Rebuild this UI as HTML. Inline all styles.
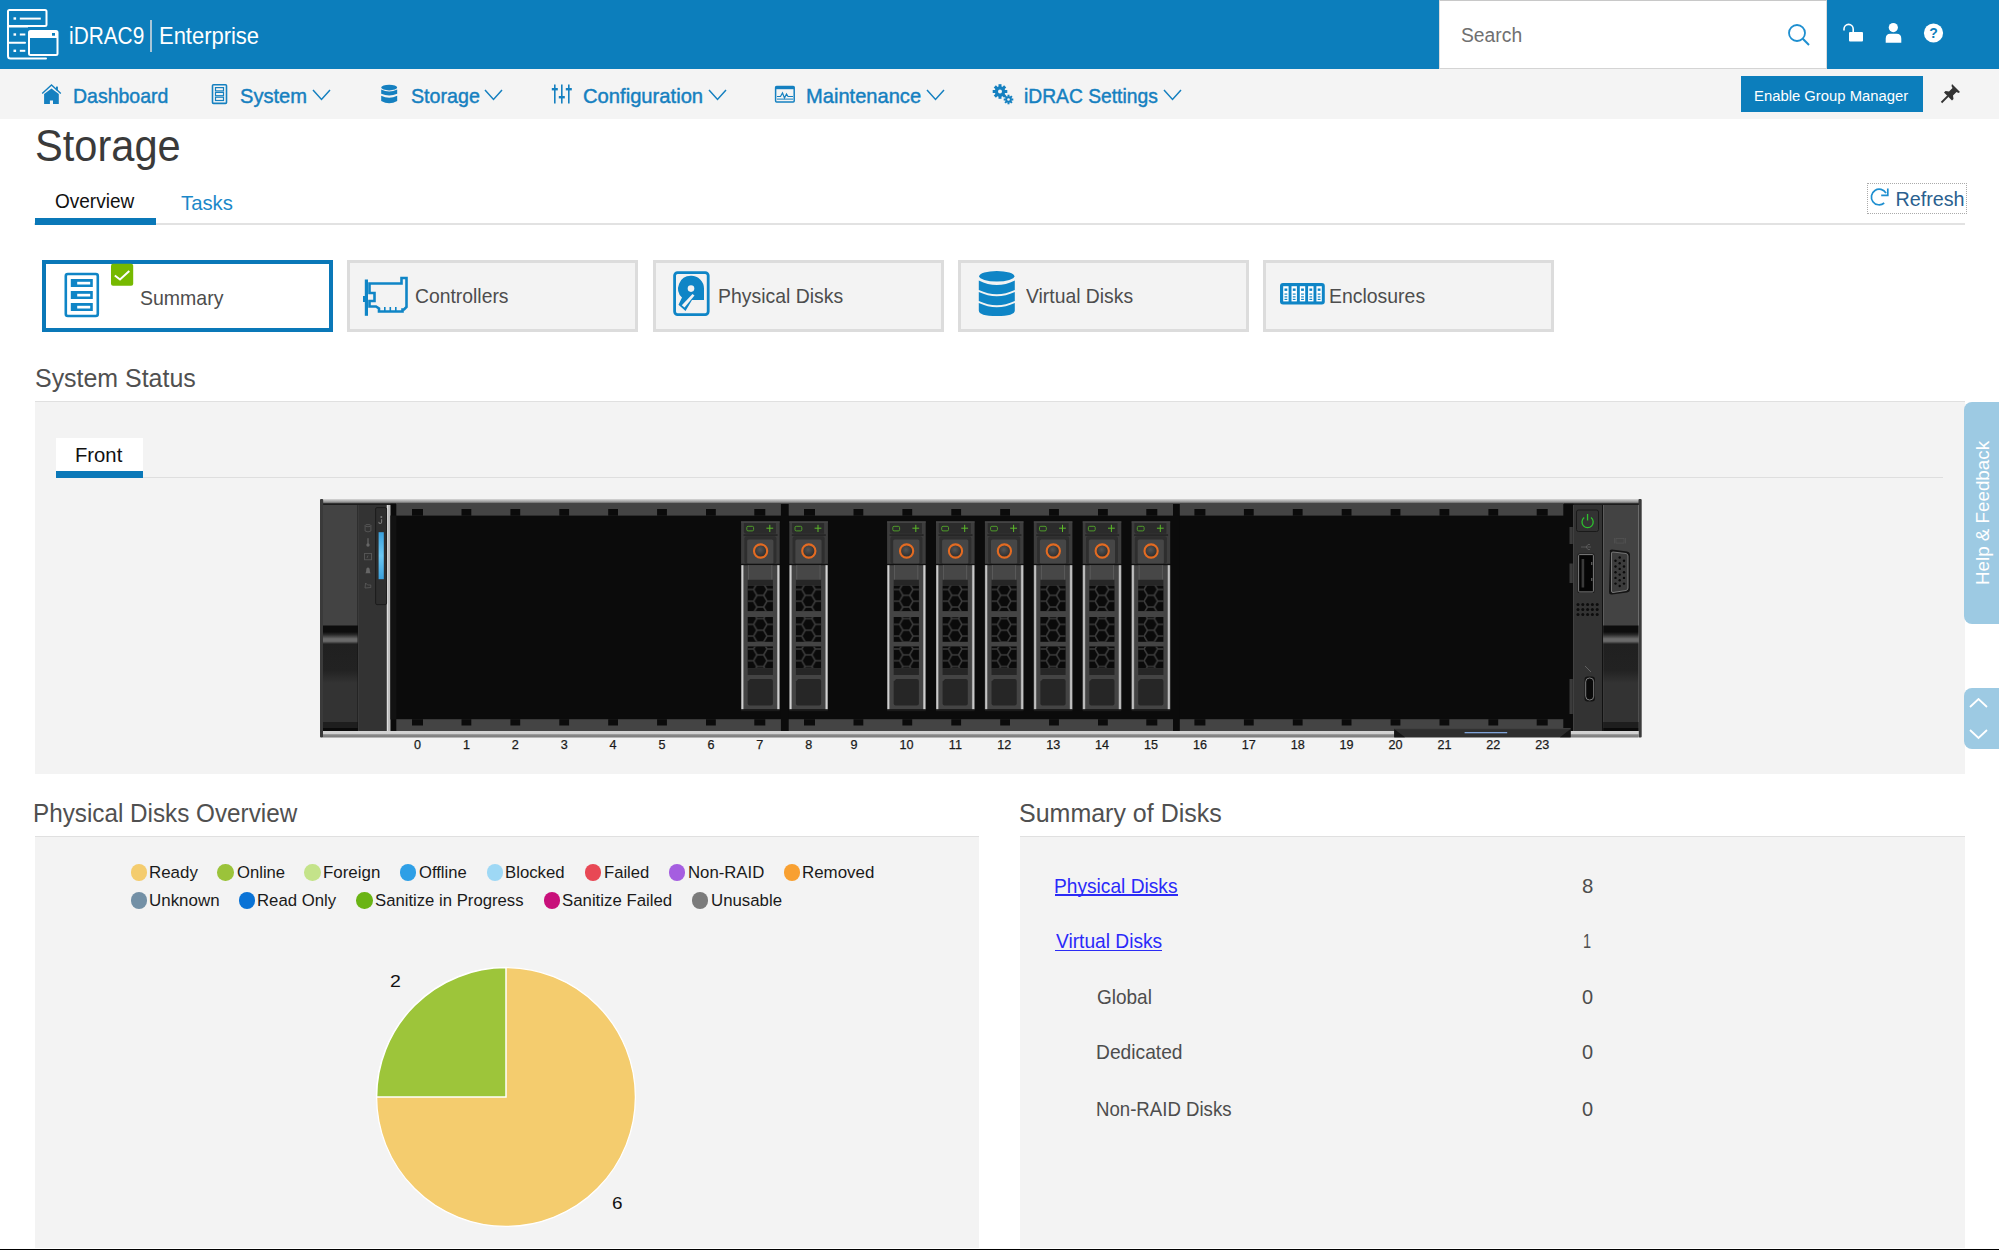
<!DOCTYPE html>
<html><head><meta charset="utf-8"><style>
html,body{margin:0;padding:0;width:1999px;height:1250px;overflow:hidden;background:#fff;font-family:"Liberation Sans", sans-serif}
.t{position:absolute;white-space:nowrap;line-height:normal}
</style></head><body>
<div style="position:absolute;left:0;top:0;width:1999px;height:69px;background:#0c7ebc"></div>
<svg style="position:absolute;left:0;top:0" width="70" height="69" viewBox="0 0 70 69">
<g fill="none" stroke="#fff" stroke-width="2">
<rect x="8" y="10" width="38.5" height="16" rx="1.5"/>
<path d="M8 26 V56 Q8 58.5 10.5 58.5 H46" stroke-linecap="round"/>
<path d="M8 42.8 H25" stroke-linecap="round"/>
<path d="M28 26.5 H8"/>
<rect x="29" y="31" width="28.5" height="24" rx="1.5"/>
</g>
<rect x="29" y="31" width="28.5" height="7" fill="#fff"/>
<rect x="52" y="33" width="3" height="2.7" fill="#0c7ebc"/>
<g fill="#fff">
<rect x="13.5" y="17.3" width="2.6" height="2.4"/><rect x="19.8" y="17.6" width="21" height="2"/>
<rect x="13.5" y="33.3" width="2.6" height="2.4"/><rect x="19.8" y="33.5" width="5.5" height="2"/>
<rect x="13.5" y="49.6" width="2.6" height="2.4"/><rect x="19.8" y="49.8" width="5.5" height="2"/>
</g></svg>
<div class="t" style="left:69.0px;top:23.18px;font-size:23px;color:#fff;font-weight:400;transform:scaleX(0.9054);transform-origin:0 0;">iDRAC9</div>
<div style="position:absolute;left:150.3px;top:19.5px;width:1.8px;height:32px;background:#a8c6d8"></div>
<div class="t" style="left:158.94px;top:22.38px;font-size:24px;color:#fff;font-weight:400;transform:scaleX(0.9147);transform-origin:0 0;">Enterprise</div>
<div style="position:absolute;left:1439px;top:0;width:388px;height:69px;background:#fff;box-sizing:border-box;border-top:1.5px solid #c8c8c8;border-bottom:1.5px solid #d4d4d4;border-left:1px solid #dcdcdc;border-right:1px solid #dcdcdc"></div>
<div class="t" style="left:1460.98px;top:23.90px;font-size:20px;color:#707070;font-weight:400;transform:scaleX(0.9643);transform-origin:0 0;">Search</div>
<svg style="position:absolute;left:1786px;top:22px" width="26" height="26" viewBox="0 0 26 26">
<circle cx="11" cy="11" r="8" fill="none" stroke="#1e8fd0" stroke-width="1.8"/>
<path d="M16.8 16.8 L23 23" stroke="#1e8fd0" stroke-width="2"/></svg>
<svg style="position:absolute;left:1840px;top:20px" width="28" height="26" viewBox="0 0 28 26">
<path d="M4 10.5 V9 a4.6 4.6 0 0 1 9.2 0 V12.5" fill="none" stroke="#fff" stroke-width="1.6"/>
<rect x="9" y="12" width="14" height="9.5" rx="1" fill="#fff"/></svg>
<svg style="position:absolute;left:1882px;top:20px" width="24" height="26" viewBox="0 0 24 26">
<circle cx="11.3" cy="7.6" r="4.6" fill="#fff"/>
<path d="M3.7 22.8 V18.8 Q3.7 13.7 8.5 13.7 H14.5 Q19.3 13.7 19.3 18.8 V22.8 Z" fill="#fff"/></svg>
<svg style="position:absolute;left:1920px;top:20px" width="26" height="26" viewBox="0 0 26 26">
<circle cx="13.5" cy="13" r="9.6" fill="#fff"/>
<text x="13.5" y="18.3" font-family="Liberation Sans" font-weight="700" font-size="14" text-anchor="middle" fill="#0c7ebc">?</text></svg>
<div style="position:absolute;left:0;top:69px;width:1999px;height:50px;background:#f4f4f4"></div>
<svg style="position:absolute;left:40px;top:83px" width="24" height="22" viewBox="0 0 24 22">
<path d="M2.2 10.6 L11.5 2 L20.8 10.6" fill="none" stroke="#1580c0" stroke-width="1.4"/>
<path d="M4.1 21 V10.9 L11.5 5.4 L18.8 10.9 V21 H13 V17.4 H9.9 V21 Z" fill="#1580c0"/>
<rect x="16" y="3.6" width="1.9" height="3.8" fill="#1580c0"/></svg>
<div class="t" style="left:72.54px;top:83.99px;font-size:20.9px;color:#1580c0;font-weight:400;transform:scaleX(0.9326);transform-origin:0 0;-webkit-text-stroke:0.45px #1580c0;">Dashboard</div>
<svg style="position:absolute;left:210px;top:83px" width="20" height="22" viewBox="0 0 20 22">
<rect x="2.5" y="1.8" width="14" height="18.6" rx="1" fill="none" stroke="#1580c0" stroke-width="1.6"/>
<rect x="5.5" y="4.6" width="8" height="3.3" fill="none" stroke="#1580c0" stroke-width="1.2"/>
<rect x="5.5" y="9.4" width="8" height="3.3" fill="none" stroke="#1580c0" stroke-width="1.2"/>
<rect x="5.5" y="14.2" width="8" height="3.3" fill="none" stroke="#1580c0" stroke-width="1.2"/></svg>
<div class="t" style="left:240.2px;top:83.99px;font-size:20.9px;color:#1580c0;font-weight:400;transform:scaleX(0.9626);transform-origin:0 0;-webkit-text-stroke:0.45px #1580c0;">System</div>
<svg style="position:absolute;left:312px;top:89px" width="19" height="12.5" viewBox="0 0 19 12.5"><path d="M1 1 L9.5 10.5 L18 1" fill="none" stroke="#1580c0" stroke-width="1.5"/></svg>
<svg style="position:absolute;left:380px;top:84px" width="19" height="21" viewBox="0 0 19 21">
<ellipse cx="9.2" cy="3.6" rx="8" ry="2.8" fill="#1580c0"/>
<path d="M1.2 5.6 Q9.2 9.6 17.2 5.6 V9.8 Q9.2 13.4 1.2 9.8 Z" fill="#1580c0"/>
<path d="M1.2 11.8 Q9.2 15.6 17.2 11.8 V17 Q9.2 21.5 1.2 17 Z" fill="#1580c0"/></svg>
<div class="t" style="left:410.81px;top:83.99px;font-size:20.9px;color:#1580c0;font-weight:400;transform:scaleX(0.9412);transform-origin:0 0;-webkit-text-stroke:0.45px #1580c0;">Storage</div>
<svg style="position:absolute;left:484px;top:89px" width="19" height="12.5" viewBox="0 0 19 12.5"><path d="M1 1 L9.5 10.5 L18 1" fill="none" stroke="#1580c0" stroke-width="1.5"/></svg>
<svg style="position:absolute;left:550px;top:83px" width="24" height="22" viewBox="0 0 24 22">
<g fill="#1580c0">
<rect x="4" y="1.5" width="1.6" height="19"/><rect x="1.8" y="5" width="6" height="2.4"/>
<rect x="11" y="1.5" width="1.6" height="19"/><rect x="8.8" y="13" width="6" height="2.4"/>
<rect x="18" y="1.5" width="1.6" height="19"/><rect x="15.8" y="5" width="6" height="2.4"/>
</g></svg>
<div class="t" style="left:582.99px;top:83.99px;font-size:20.9px;color:#1580c0;font-weight:400;transform:scaleX(0.9664);transform-origin:0 0;-webkit-text-stroke:0.45px #1580c0;">Configuration</div>
<svg style="position:absolute;left:707.5px;top:89px" width="19" height="12.5" viewBox="0 0 19 12.5"><path d="M1 1 L9.5 10.5 L18 1" fill="none" stroke="#1580c0" stroke-width="1.5"/></svg>
<svg style="position:absolute;left:774px;top:85px" width="22" height="19" viewBox="0 0 22 19">
<rect x="1.6" y="1.6" width="18.6" height="15.3" rx="1" fill="none" stroke="#1580c0" stroke-width="1.5"/>
<rect x="1.6" y="1.6" width="18.6" height="2.6" fill="#1580c0"/>
<path d="M3 11.5 H6.5 L8.5 8 L10.5 13 L12.5 9 L14 11.5 H19" fill="none" stroke="#1580c0" stroke-width="1.2"/>
<rect x="3" y="13.6" width="16" height="1" fill="#1580c0"/></svg>
<div class="t" style="left:805.89px;top:83.99px;font-size:20.9px;color:#1580c0;font-weight:400;transform:scaleX(0.9621);transform-origin:0 0;-webkit-text-stroke:0.45px #1580c0;">Maintenance</div>
<svg style="position:absolute;left:926px;top:89px" width="19" height="12.5" viewBox="0 0 19 12.5"><path d="M1 1 L9.5 10.5 L18 1" fill="none" stroke="#1580c0" stroke-width="1.5"/></svg>
<svg style="position:absolute;left:992px;top:84px" width="23" height="21" viewBox="0 0 23 21">
<g fill="#1580c0">
<circle cx="8" cy="7.5" r="5.2"/>
<g transform="translate(8 7.5)"><rect x="-1.5" y="-7.3" width="3" height="3.2" transform="rotate(0)"/><rect x="-1.5" y="-7.3" width="3" height="3.2" transform="rotate(45)"/><rect x="-1.5" y="-7.3" width="3" height="3.2" transform="rotate(90)"/><rect x="-1.5" y="-7.3" width="3" height="3.2" transform="rotate(135)"/><rect x="-1.5" y="-7.3" width="3" height="3.2" transform="rotate(180)"/><rect x="-1.5" y="-7.3" width="3" height="3.2" transform="rotate(225)"/><rect x="-1.5" y="-7.3" width="3" height="3.2" transform="rotate(270)"/><rect x="-1.5" y="-7.3" width="3" height="3.2" transform="rotate(315)"/></g>
<circle cx="16.5" cy="15.5" r="3.2"/>
<g transform="translate(16.5 15.5)"><rect x="-1" y="-4.8" width="2" height="2.2" transform="rotate(0)"/><rect x="-1" y="-4.8" width="2" height="2.2" transform="rotate(45)"/><rect x="-1" y="-4.8" width="2" height="2.2" transform="rotate(90)"/><rect x="-1" y="-4.8" width="2" height="2.2" transform="rotate(135)"/><rect x="-1" y="-4.8" width="2" height="2.2" transform="rotate(180)"/><rect x="-1" y="-4.8" width="2" height="2.2" transform="rotate(225)"/><rect x="-1" y="-4.8" width="2" height="2.2" transform="rotate(270)"/><rect x="-1" y="-4.8" width="2" height="2.2" transform="rotate(315)"/></g>
</g>
<circle cx="8" cy="7.5" r="2" fill="#f4f4f4"/><circle cx="16.5" cy="15.5" r="1.3" fill="#f4f4f4"/></svg>
<div class="t" style="left:1024.24px;top:83.99px;font-size:20.9px;color:#1580c0;font-weight:400;transform:scaleX(0.9218);transform-origin:0 0;-webkit-text-stroke:0.45px #1580c0;">iDRAC Settings</div>
<svg style="position:absolute;left:1163px;top:89px" width="19" height="12.5" viewBox="0 0 19 12.5"><path d="M1 1 L9.5 10.5 L18 1" fill="none" stroke="#1580c0" stroke-width="1.5"/></svg>
<div style="position:absolute;left:1741px;top:76px;width:182px;height:36px;background:#0c7ebc"></div>
<div class="t" style="left:1754.41px;top:87.04px;font-size:15.2px;color:#fff;font-weight:400;transform:scaleX(0.9764);transform-origin:0 0;">Enable Group Manager</div>
<svg style="position:absolute;left:1939px;top:81px" width="24" height="24" viewBox="0 0 24 24">
<path d="M13 3 L21 11 L19.5 12 L17.5 11 L14 14.5 L14.5 18 L13 19.5 L5 11.5 L6.5 10 L10 10.5 L13.5 7 L12.5 5 Z" fill="#333"/>
<path d="M9 15 L2.5 21.5" stroke="#333" stroke-width="1.8"/></svg>
<div class="t" style="left:34.84px;top:122.38px;font-size:43.5px;color:#3a3a3a;font-weight:400;transform:scaleX(0.9561);transform-origin:0 0;">Storage</div>
<div class="t" style="left:55.14px;top:189.45px;font-size:20.5px;color:#111;font-weight:400;transform:scaleX(0.9272);transform-origin:0 0;">Overview</div>
<div class="t" style="left:180.89px;top:190.77px;font-size:20.7px;color:#1a88c9;font-weight:400;transform:scaleX(0.9812);transform-origin:0 0;">Tasks</div>
<div style="position:absolute;left:34px;top:223px;width:1931px;height:2px;background:#e2e2e2"></div>
<div style="position:absolute;left:34.5px;top:218px;width:121.5px;height:6.6px;background:#0a78b8"></div>
<div style="position:absolute;left:1867px;top:183px;width:100px;height:30.5px;box-sizing:border-box;border:1px dotted #aaa"></div>
<svg style="position:absolute;left:1869px;top:186px" width="22" height="22" viewBox="0 0 22 22">
<path d="M15.2 17 A7.8 7.8 0 1 1 17 7.2" fill="none" stroke="#1e8fd0" stroke-width="1.7"/>
<path d="M12.2 9.4 H18.8 V2.6" fill="none" stroke="#1e8fd0" stroke-width="1.7"/></svg>
<div class="t" style="left:1895.42px;top:187.62px;font-size:19.76px;color:#2a5f8f;font-weight:400;">Refresh</div>
<div style="position:absolute;left:42px;top:260px;width:291px;height:72px;box-sizing:border-box;border:4px solid #0a78b8;background:#fff"></div>
<div style="position:absolute;left:347px;top:260px;width:291px;height:72px;box-sizing:border-box;border:3px solid #dcdcdc;background:#f3f3f3"></div>
<div style="position:absolute;left:653px;top:260px;width:291px;height:72px;box-sizing:border-box;border:3px solid #dcdcdc;background:#f3f3f3"></div>
<div style="position:absolute;left:958px;top:260px;width:291px;height:72px;box-sizing:border-box;border:3px solid #dcdcdc;background:#f3f3f3"></div>
<div style="position:absolute;left:1263px;top:260px;width:291px;height:72px;box-sizing:border-box;border:3px solid #dcdcdc;background:#f3f3f3"></div>
<svg style="position:absolute;left:60px;top:260px" width="80" height="63" viewBox="0 0 80 63">
<rect x="5.8" y="14" width="32" height="42" rx="2" fill="none" stroke="#0f85c6" stroke-width="2.6"/>
<g fill="#0f85c6"><rect x="10.8" y="19" width="22" height="8"/><rect x="10.8" y="31" width="22" height="8"/><rect x="10.8" y="43" width="22" height="8"/></g>
<g fill="#fff"><rect x="17.2" y="21.8" width="13" height="2.7"/><rect x="17.2" y="33.8" width="13" height="2.7"/><rect x="17.2" y="45.8" width="13" height="2.7"/></g>
<rect x="51" y="3.8" width="22.2" height="22" rx="2" fill="#76b900"/>
<path d="M54.8 15.5 L60 19.5 L69.3 11" fill="none" stroke="#fff" stroke-width="2"/></svg>
<div class="t" style="left:139.72px;top:285.56px;font-size:20.6px;color:#4d4d4d;font-weight:400;transform:scaleX(0.9472);transform-origin:0 0;">Summary</div>
<svg style="position:absolute;left:360px;top:272px" width="52" height="48" viewBox="0 0 52 48">
<rect x="4.8" y="7.5" width="3.2" height="36.3" fill="#0f85c6"/>
<path d="M9.5 11.5 H41.5 V6 H46.5 V35 L44 37.5 H42.5 V39.5 H19 V36.5 L16 34.5 H9.5 V29 H14.5 V21 H9.5 Z" fill="none" stroke="#0f85c6" stroke-width="2.6" stroke-linejoin="miter"/>
<g fill="#0f85c6"><rect x="24" y="35" width="1.6" height="4"/><rect x="29.5" y="35" width="1.6" height="4"/><rect x="35" y="35" width="1.6" height="4"/></g>
<rect x="3" y="24" width="2" height="6" fill="#0f85c6"/></svg>
<div class="t" style="left:414.53px;top:284.16px;font-size:20.6px;color:#4d4d4d;font-weight:400;transform:scaleX(0.9392);transform-origin:0 0;">Controllers</div>
<svg style="position:absolute;left:670px;top:268px" width="44" height="52" viewBox="0 0 44 52">
<rect x="4.6" y="4.6" width="33.6" height="42" rx="3" fill="none" stroke="#0f85c6" stroke-width="2.8"/>
<path d="M21 7.8 A12.7 12.7 0 0 0 12 29.6 L8.5 36.8 L15.5 43 L22 32 H34 V20.5 A12.7 12.7 0 0 0 21 7.8 Z" fill="#0f85c6"/>
<circle cx="21" cy="20.6" r="3.3" fill="#f3f3f3"/>
<path d="M22.5 26 L11.8 37.2 L14.5 39.5 L24.5 27.5 Z" fill="#f3f3f3"/></svg>
<div class="t" style="left:718.45px;top:284.16px;font-size:20.6px;color:#4d4d4d;font-weight:400;transform:scaleX(0.9424);transform-origin:0 0;">Physical Disks</div>
<svg style="position:absolute;left:975px;top:268px" width="44" height="52" viewBox="0 0 44 52">
<ellipse cx="21.8" cy="8.2" rx="17.6" ry="5.2" fill="#0f85c6"/>
<path d="M3.8 12.5 Q21.8 21.5 39.8 12.5 V22 Q21.8 30.5 3.8 22 Z" fill="#0f85c6"/>
<path d="M3.8 24 Q21.8 32.5 39.8 24 V33 Q21.8 41.5 3.8 33 Z" fill="#0f85c6"/>
<path d="M3.8 35 Q21.8 43.5 39.8 35 V42.5 Q39.8 48 21.8 48 Q3.8 48 3.8 42.5 Z" fill="#0f85c6"/></svg>
<div class="t" style="left:1025.5px;top:284.16px;font-size:20.6px;color:#4d4d4d;font-weight:400;transform:scaleX(0.9385);transform-origin:0 0;">Virtual Disks</div>
<svg style="position:absolute;left:1280px;top:283px" width="46" height="22" viewBox="0 0 46 22">
<rect x="0" y="0" width="44.8" height="21.4" rx="3" fill="#0f85c6"/><rect x="3.2" y="3.2" width="5.4" height="15.2" fill="#fff"/><g fill="#0f85c6"><rect x="4.5" y="5.5" width="2.8" height="2.4"/><rect x="4.5" y="10.5" width="2.8" height="1.2"/><rect x="4.5" y="13.3" width="2.8" height="1.2"/><rect x="4.5" y="15.8" width="2.8" height="1.2"/></g><rect x="11.5" y="3.2" width="5.4" height="15.2" fill="#fff"/><g fill="#0f85c6"><rect x="12.8" y="5.5" width="2.8" height="2.4"/><rect x="12.8" y="10.5" width="2.8" height="1.2"/><rect x="12.8" y="13.3" width="2.8" height="1.2"/><rect x="12.8" y="15.8" width="2.8" height="1.2"/></g><rect x="19.8" y="3.2" width="5.4" height="15.2" fill="#fff"/><g fill="#0f85c6"><rect x="21.1" y="5.5" width="2.8" height="2.4"/><rect x="21.1" y="10.5" width="2.8" height="1.2"/><rect x="21.1" y="13.3" width="2.8" height="1.2"/><rect x="21.1" y="15.8" width="2.8" height="1.2"/></g><rect x="28.1" y="3.2" width="5.4" height="15.2" fill="#fff"/><g fill="#0f85c6"><rect x="29.400000000000002" y="5.5" width="2.8" height="2.4"/><rect x="29.400000000000002" y="10.5" width="2.8" height="1.2"/><rect x="29.400000000000002" y="13.3" width="2.8" height="1.2"/><rect x="29.400000000000002" y="15.8" width="2.8" height="1.2"/></g><rect x="36.400000000000006" y="3.2" width="5.4" height="15.2" fill="#fff"/><g fill="#0f85c6"><rect x="37.7" y="5.5" width="2.8" height="2.4"/><rect x="37.7" y="10.5" width="2.8" height="1.2"/><rect x="37.7" y="13.3" width="2.8" height="1.2"/><rect x="37.7" y="15.8" width="2.8" height="1.2"/></g></svg>
<div class="t" style="left:1329.45px;top:284.16px;font-size:20.6px;color:#4d4d4d;font-weight:400;transform:scaleX(0.9434);transform-origin:0 0;">Enclosures</div>
<div class="t" style="left:34.5px;top:363.65px;font-size:25.8px;color:#505050;font-weight:400;transform:scaleX(0.9664);transform-origin:0 0;">System Status</div>
<div style="position:absolute;left:34.5px;top:401px;width:1930.5px;height:372px;background:#f3f3f3;border-top:1.5px solid #e0e0e0"></div>
<div style="position:absolute;left:56px;top:438px;width:87px;height:40px;background:#fff"></div>
<div style="position:absolute;left:56px;top:476.5px;width:1887px;height:1.5px;background:#dedede"></div>
<div style="position:absolute;left:56px;top:471px;width:87px;height:7px;background:#0a78b8"></div>
<div class="t" style="left:74.78px;top:443.16px;font-size:20.6px;color:#111;font-weight:400;transform:scaleX(0.9833);transform-origin:0 0;">Front</div>
<svg style="position:absolute;left:318px;top:497px" width="1326" height="243" viewBox="318 497 1326 243" shape-rendering="geometricPrecision">
<defs>
<linearGradient id="gtop" x1="0" y1="0" x2="0" y2="1"><stop offset="0" stop-color="#d8d8d8"/><stop offset="0.55" stop-color="#9a9a9a"/><stop offset="1" stop-color="#444"/></linearGradient>
<linearGradient id="gbot" x1="0" y1="0" x2="0" y2="1"><stop offset="0" stop-color="#d4d4d4"/><stop offset="0.5" stop-color="#cfcfcf"/><stop offset="0.55" stop-color="#8a8a8a"/><stop offset="1" stop-color="#7a7a7a"/></linearGradient>
<linearGradient id="gband" x1="0" y1="0" x2="0" y2="1"><stop offset="0" stop-color="#0d0d0d"/><stop offset="0.35" stop-color="#0d0d0d"/><stop offset="0.5" stop-color="#2a2a2a"/><stop offset="0.72" stop-color="#6a6a6a"/><stop offset="0.85" stop-color="#6a6a6a"/><stop offset="1" stop-color="#222"/></linearGradient>
<linearGradient id="glow" x1="0" y1="0" x2="0" y2="1"><stop offset="0" stop-color="#202020"/><stop offset="0.3" stop-color="#222"/><stop offset="0.45" stop-color="#333"/><stop offset="1" stop-color="#333"/></linearGradient>
<linearGradient id="gsil" x1="0" y1="0" x2="1" y2="0"><stop offset="0" stop-color="#8a8a8a"/><stop offset="0.5" stop-color="#d6d6d6"/><stop offset="1" stop-color="#8a8a8a"/></linearGradient>
<linearGradient id="gled" x1="0" y1="0" x2="0" y2="1"><stop offset="0" stop-color="#3aa0dc"/><stop offset="0.5" stop-color="#6cc8f4"/><stop offset="1" stop-color="#3aa0dc"/></linearGradient>
<radialGradient id="gbtn" cx="0.45" cy="0.4" r="0.6"><stop offset="0" stop-color="#555"/><stop offset="1" stop-color="#2a2a2a"/></radialGradient>
<pattern id="hex" patternUnits="userSpaceOnUse" width="20.4" height="11.7" x="0" y="0">
<path d="M0 5.85 L3.4 0 H10.2 L13.6 5.85 L10.2 11.7 H3.4 Z M13.6 5.85 H20.4" fill="none" stroke="#3d3d3d" stroke-width="1.5"/>
</pattern>
</defs>
<rect x="321" y="499" width="1319" height="5" fill="url(#gtop)"/>
<rect x="321" y="503.4" width="75" height="1.6" fill="#1c1c1c"/><rect x="1564" y="503.4" width="75" height="1.6" fill="#1c1c1c"/>
<rect x="320" y="499" width="3.2" height="238.5" rx="1" fill="#3a3a3a"/>
<rect x="1638.5" y="499" width="3.2" height="238.5" rx="1" fill="#3a3a3a"/>
<rect x="323" y="505" width="35" height="226" fill="#434343"/>
<rect x="323" y="625.5" width="35" height="18.5" fill="url(#gband)"/>
<rect x="323" y="644" width="35" height="87" fill="url(#glow)"/>
<rect x="323" y="722" width="35" height="6" fill="#1e1e1e"/><rect x="323" y="728" width="35" height="3" fill="#0a0a0a"/>
<rect x="357.6" y="505" width="1.2" height="226" fill="#111"/>
<rect x="358.8" y="505" width="28" height="226" fill="#333"/>
<rect x="375.6" y="507.6" width="11" height="97" rx="1.5" fill="#2e2e2e" stroke="#1c1c1c" stroke-width="1"/>
<rect x="378.6" y="532.2" width="5.2" height="47" fill="url(#gled)"/>
<g fill="#777"><circle cx="381.3" cy="517" r="1"/></g><path d="M381.6 519.2 V521.8 Q381.6 523.8 379.8 523.4 Q378.6 523 378.9 521.8" fill="none" stroke="#777" stroke-width="1.1"/>
<g fill="none" stroke="#5c5c5c" stroke-width="0.8"><ellipse cx="368" cy="525.6" rx="2.9" ry="1.1"/><path d="M365.1 525.6 V531 Q368 532.8 370.9 531 V525.6"/><rect x="364.6" y="553.6" width="6.9" height="6.2"/><path d="M367 558 l1 -2.5"/><path d="M365 588 l0.6 -5 l2 2 h3.2 v2.5 z"/></g>
<g fill="#666"><rect x="367.4" y="538.2" width="1.2" height="6"/><circle cx="368" cy="545" r="1.7"/><path d="M365.3 573.2 Q366.2 572.5 366.2 570.5 Q366.2 567.6 368 567.6 Q369.8 567.6 369.8 570.5 Q369.8 572.5 370.7 573.2 Z"/></g>
<rect x="387.6" y="505" width="2.8" height="226" fill="#bdbdbd"/>
<rect x="390.4" y="503.8" width="1183" height="227.2" fill="#0b0b0b"/>
<rect x="390.4" y="515.5" width="6" height="204" fill="#121212"/>
<rect x="396.3" y="503.8" width="1167" height="11.8" fill="#444"/>
<rect x="396.3" y="719.2" width="1167" height="11.8" fill="#444"/>
<rect x="412.00" y="509" width="11" height="6.7" fill="#0b0b0b"/>
<rect x="412.00" y="719.2" width="11" height="6.3" fill="#0b0b0b"/>
<rect x="461.50" y="509" width="9.8" height="6.7" fill="#0b0b0b"/>
<rect x="461.50" y="719.2" width="9.8" height="6.3" fill="#0b0b0b"/>
<rect x="510.40" y="509" width="9.8" height="6.7" fill="#0b0b0b"/>
<rect x="510.40" y="719.2" width="9.8" height="6.3" fill="#0b0b0b"/>
<rect x="559.30" y="509" width="9.8" height="6.7" fill="#0b0b0b"/>
<rect x="559.30" y="719.2" width="9.8" height="6.3" fill="#0b0b0b"/>
<rect x="608.20" y="509" width="9.8" height="6.7" fill="#0b0b0b"/>
<rect x="608.20" y="719.2" width="9.8" height="6.3" fill="#0b0b0b"/>
<rect x="657.10" y="509" width="9.8" height="6.7" fill="#0b0b0b"/>
<rect x="657.10" y="719.2" width="9.8" height="6.3" fill="#0b0b0b"/>
<rect x="706.00" y="509" width="9.8" height="6.7" fill="#0b0b0b"/>
<rect x="706.00" y="719.2" width="9.8" height="6.3" fill="#0b0b0b"/>
<rect x="754.30" y="509" width="11" height="6.7" fill="#0b0b0b"/>
<rect x="754.30" y="719.2" width="11" height="6.3" fill="#0b0b0b"/>
<rect x="804.00" y="509" width="11" height="6.7" fill="#0b0b0b"/>
<rect x="804.00" y="719.2" width="11" height="6.3" fill="#0b0b0b"/>
<rect x="853.50" y="509" width="9.8" height="6.7" fill="#0b0b0b"/>
<rect x="853.50" y="719.2" width="9.8" height="6.3" fill="#0b0b0b"/>
<rect x="902.40" y="509" width="9.8" height="6.7" fill="#0b0b0b"/>
<rect x="902.40" y="719.2" width="9.8" height="6.3" fill="#0b0b0b"/>
<rect x="951.30" y="509" width="9.8" height="6.7" fill="#0b0b0b"/>
<rect x="951.30" y="719.2" width="9.8" height="6.3" fill="#0b0b0b"/>
<rect x="1000.20" y="509" width="9.8" height="6.7" fill="#0b0b0b"/>
<rect x="1000.20" y="719.2" width="9.8" height="6.3" fill="#0b0b0b"/>
<rect x="1049.10" y="509" width="9.8" height="6.7" fill="#0b0b0b"/>
<rect x="1049.10" y="719.2" width="9.8" height="6.3" fill="#0b0b0b"/>
<rect x="1098.00" y="509" width="9.8" height="6.7" fill="#0b0b0b"/>
<rect x="1098.00" y="719.2" width="9.8" height="6.3" fill="#0b0b0b"/>
<rect x="1146.30" y="509" width="11" height="6.7" fill="#0b0b0b"/>
<rect x="1146.30" y="719.2" width="11" height="6.3" fill="#0b0b0b"/>
<rect x="1194.40" y="509" width="11" height="6.7" fill="#0b0b0b"/>
<rect x="1194.40" y="719.2" width="11" height="6.3" fill="#0b0b0b"/>
<rect x="1243.90" y="509" width="9.8" height="6.7" fill="#0b0b0b"/>
<rect x="1243.90" y="719.2" width="9.8" height="6.3" fill="#0b0b0b"/>
<rect x="1292.80" y="509" width="9.8" height="6.7" fill="#0b0b0b"/>
<rect x="1292.80" y="719.2" width="9.8" height="6.3" fill="#0b0b0b"/>
<rect x="1341.70" y="509" width="9.8" height="6.7" fill="#0b0b0b"/>
<rect x="1341.70" y="719.2" width="9.8" height="6.3" fill="#0b0b0b"/>
<rect x="1390.60" y="509" width="9.8" height="6.7" fill="#0b0b0b"/>
<rect x="1390.60" y="719.2" width="9.8" height="6.3" fill="#0b0b0b"/>
<rect x="1439.50" y="509" width="9.8" height="6.7" fill="#0b0b0b"/>
<rect x="1439.50" y="719.2" width="9.8" height="6.3" fill="#0b0b0b"/>
<rect x="1488.40" y="509" width="9.8" height="6.7" fill="#0b0b0b"/>
<rect x="1488.40" y="719.2" width="9.8" height="6.3" fill="#0b0b0b"/>
<rect x="1536.70" y="509" width="11" height="6.7" fill="#0b0b0b"/>
<rect x="1536.70" y="719.2" width="11" height="6.3" fill="#0b0b0b"/>
<rect x="780.9" y="504" width="7.8" height="227" fill="#0b0b0b"/>
<rect x="1173" y="504" width="6.8" height="227" fill="#0b0b0b"/>
<rect x="1564" y="505" width="9.5" height="226" fill="#0b0b0b"/>
<g fill="#3a3a3a"><rect x="1569.5" y="527" width="3.3" height="17"/><rect x="1569.5" y="563.5" width="3.3" height="19.5"/><rect x="1569.5" y="679" width="3.3" height="35"/></g>
<rect x="1573.5" y="505" width="28.5" height="226" fill="#333"/>
<rect x="1602" y="505" width="1.2" height="226" fill="#111"/>
<rect x="1576.5" y="510" width="22" height="21.5" rx="2" fill="#333" stroke="#1a1a1a" stroke-width="1"/>
<path d="M1584.2 517.6 A5.6 5.6 0 1 0 1591 517.6" fill="none" stroke="#2ec02e" stroke-width="1.3"/><rect x="1586.9" y="514" width="1.3" height="6.5" fill="#2ec02e"/>
<g stroke="#666" stroke-width="0.7" fill="none"><path d="M1581 547 h10 M1586 547 l2 -2.5 h2 M1586 547 l2 2.5 h2"/></g>
<rect x="1577.5" y="553.5" width="17" height="39.5" rx="1.5" fill="#1c1c1c"/>
<rect x="1578.6" y="554.6" width="14.8" height="37.3" rx="1" fill="#050505" stroke="#8a8a8a" stroke-width="0.9"/>
<rect x="1581.6" y="559" width="2.6" height="28.5" fill="#3a3a3a"/>
<g fill="#555"><rect x="1591" y="562" width="1.4" height="3"/><rect x="1591" y="578" width="1.4" height="3"/></g>
<circle cx="1578.0" cy="604.5" r="1.5" fill="#0d0d0d"/>
<circle cx="1582.8" cy="604.5" r="1.5" fill="#0d0d0d"/>
<circle cx="1587.6" cy="604.5" r="1.5" fill="#0d0d0d"/>
<circle cx="1592.4" cy="604.5" r="1.5" fill="#0d0d0d"/>
<circle cx="1597.2" cy="604.5" r="1.5" fill="#0d0d0d"/>
<circle cx="1578.0" cy="609.5" r="1.5" fill="#0d0d0d"/>
<circle cx="1582.8" cy="609.5" r="1.5" fill="#0d0d0d"/>
<circle cx="1587.6" cy="609.5" r="1.5" fill="#0d0d0d"/>
<circle cx="1592.4" cy="609.5" r="1.5" fill="#0d0d0d"/>
<circle cx="1597.2" cy="609.5" r="1.5" fill="#0d0d0d"/>
<circle cx="1578.0" cy="614.5" r="1.5" fill="#0d0d0d"/>
<circle cx="1582.8" cy="614.5" r="1.5" fill="#0d0d0d"/>
<circle cx="1587.6" cy="614.5" r="1.5" fill="#0d0d0d"/>
<circle cx="1592.4" cy="614.5" r="1.5" fill="#0d0d0d"/>
<circle cx="1597.2" cy="614.5" r="1.5" fill="#0d0d0d"/>
<rect x="1584.5" y="676.5" width="10.5" height="25" rx="3" fill="#141414"/>
<rect x="1585.7" y="678" width="8" height="22" rx="3.8" fill="#0a0a0a" stroke="#8a8a8a" stroke-width="0.9"/>
<path d="M1585 666 l3 3 l3 3" stroke="#666" stroke-width="0.9" fill="none"/>
<rect x="1603.2" y="505" width="35.3" height="226" fill="#434343"/>
<rect x="1603.2" y="625.5" width="35.3" height="18.5" fill="url(#gband)"/>
<rect x="1603.2" y="644" width="35.3" height="87" fill="url(#glow)"/>
<rect x="1603.2" y="722" width="35.3" height="6" fill="#1e1e1e"/><rect x="1603.2" y="728" width="35.3" height="3" fill="#0a0a0a"/>
<path d="M1610 552 Q1609 549.5 1612 549.5 L1627 551.5 Q1630 552 1630 555 L1630 589 Q1630 592 1627 592.5 L1612 594.5 Q1609 595 1609 592 Z" fill="#141414"/>
<path d="M1611.5 554 Q1611 552 1613 552 L1626 553.5 Q1628 554 1628 556 L1628 588 Q1628 590 1626 590.5 L1613 592.5 Q1611.5 592.5 1611.5 591 Z" fill="#3c3c3c" stroke="#8a8a8a" stroke-width="0.8"/>
<circle cx="1615.5" cy="560.8" r="1.2" fill="#0a0a0a"/>
<circle cx="1624" cy="560.8" r="1.2" fill="#0a0a0a"/>
<circle cx="1615.5" cy="566.5" r="1.2" fill="#0a0a0a"/>
<circle cx="1624" cy="566.5" r="1.2" fill="#0a0a0a"/>
<circle cx="1615.5" cy="572.2" r="1.2" fill="#0a0a0a"/>
<circle cx="1624" cy="572.2" r="1.2" fill="#0a0a0a"/>
<circle cx="1615.5" cy="577.9" r="1.2" fill="#0a0a0a"/>
<circle cx="1624" cy="577.9" r="1.2" fill="#0a0a0a"/>
<circle cx="1615.5" cy="583.6" r="1.2" fill="#0a0a0a"/>
<circle cx="1624" cy="583.6" r="1.2" fill="#0a0a0a"/>
<circle cx="1619.7" cy="557.5" r="1.2" fill="#0a0a0a"/>
<circle cx="1619.7" cy="563.2" r="1.2" fill="#0a0a0a"/>
<circle cx="1619.7" cy="568.9" r="1.2" fill="#0a0a0a"/>
<circle cx="1619.7" cy="574.6" r="1.2" fill="#0a0a0a"/>
<circle cx="1619.7" cy="580.3" r="1.2" fill="#0a0a0a"/>
<circle cx="1619.7" cy="586.0" r="1.2" fill="#0a0a0a"/>
<g fill="none" stroke="#555" stroke-width="0.7"><rect x="1616" y="538.5" width="8" height="4.6"/><path d="M1614.5 538 v5.5 M1625.5 538 v5.5"/></g>
<rect x="323" y="731" width="1315.5" height="6.5" fill="url(#gbot)"/>
<path d="M1394.2 728.2 H1570.6 V737.3 H1394.2 Z" fill="#2e2e2e"/>
<path d="M1394.2 729 L1405 737.3 H1394.2 Z M1570.6 729 L1560 737.3 H1570.6 Z" fill="#151515"/>
<rect x="1394.2" y="728.2" width="176.4" height="1" fill="#444"/>
<rect x="1464.6" y="732" width="42.6" height="1.3" fill="#7fa3d8"/>
<g>
<rect x="741.10" y="521.4" width="38.6" height="42.6" fill="#3d3d3d"/>
<rect x="741.10" y="521.4" width="38.6" height="1.2" fill="#4a4a4a"/>
<path d="M743.90 523 H775.90 V533.8 H746.10 Q743.90 533.8 743.90 531.5 Z" fill="#2b2b2b"/>
<rect x="746.80" y="526.3" width="6.8" height="4.6" rx="1.3" fill="none" stroke="#52a82a" stroke-width="0.9"/>
<path d="M766.40 528.2 H773.20 M769.80 524.8 V532" stroke="#5cb82a" stroke-width="1" fill="none"/>
<rect x="743.60" y="534.2" width="34" height="1.8" fill="#262626"/>
<rect x="744.40" y="536.2" width="32" height="27.6" rx="2" fill="#2e2e2e"/>
<rect x="747.20" y="539.4" width="26.2" height="24.4" rx="1.5" fill="#464646"/>
<circle cx="760.60" cy="551" r="6.6" fill="url(#gbtn)" stroke="#e36b22" stroke-width="2.1"/>
<rect x="741.10" y="563.8" width="38.6" height="1.4" fill="#111"/>
<rect x="741.10" y="565.2" width="38.6" height="144.2" fill="#444"/>
<rect x="741.10" y="565.2" width="2.6" height="144.2" fill="url(#gsil)"/>
<rect x="777.00" y="565.2" width="2.7" height="144.2" fill="url(#gsil)"/>
<rect x="747.70" y="565.2" width="25.2" height="14.6" fill="#474747"/>
<rect x="748.20" y="565.2" width="0.8" height="14.6" fill="#5e5e5e"/><rect x="771.40" y="565.2" width="0.8" height="14.6" fill="#5e5e5e"/>
<rect x="747.70" y="579.8" width="25.2" height="5.2" fill="#262626"/>
<rect x="747.70" y="585.5" width="25.2" height="25.6" fill="#0a0a0a"/>
<svg x="747.70" y="585.5" width="25.2" height="25.6" viewBox="0 0 25.2 25.6" overflow="hidden"><rect x="-40" y="-40" width="120" height="120" fill="url(#hex)" transform="translate(5.80 -1.85)"/></svg>
<rect x="747.70" y="617" width="25.2" height="24.8" fill="#0a0a0a"/>
<svg x="747.70" y="617" width="25.2" height="24.8" viewBox="0 0 25.2 24.8" overflow="hidden"><rect x="-40" y="-40" width="120" height="120" fill="url(#hex)" transform="translate(5.80 1.55)"/></svg>
<rect x="747.70" y="646.4" width="25.2" height="21.9" fill="#0a0a0a"/>
<svg x="747.70" y="646.4" width="25.2" height="21.9" viewBox="0 0 25.2 21.9" overflow="hidden"><rect x="-40" y="-40" width="120" height="120" fill="url(#hex)" transform="translate(5.80 -3.25)"/></svg>
<rect x="747.70" y="668.3" width="25.2" height="6.7" fill="#262626"/>
<path d="M750.20 679 H770.90 Q772.90 679 772.90 681 V703.4 Q772.90 705.4 770.90 705.4 H749.70 Q747.70 705.4 747.70 703.4 V681.5 Z" fill="#262626"/>
<rect x="741.10" y="709.4" width="38.6" height="1.8" fill="#1a1a1a"/>
</g>
<g>
<rect x="789.30" y="521.4" width="38.6" height="42.6" fill="#3d3d3d"/>
<rect x="789.30" y="521.4" width="38.6" height="1.2" fill="#4a4a4a"/>
<path d="M792.10 523 H824.10 V533.8 H794.30 Q792.10 533.8 792.10 531.5 Z" fill="#2b2b2b"/>
<rect x="795.00" y="526.3" width="6.8" height="4.6" rx="1.3" fill="none" stroke="#52a82a" stroke-width="0.9"/>
<path d="M814.60 528.2 H821.40 M818.00 524.8 V532" stroke="#5cb82a" stroke-width="1" fill="none"/>
<rect x="791.80" y="534.2" width="34" height="1.8" fill="#262626"/>
<rect x="792.60" y="536.2" width="32" height="27.6" rx="2" fill="#2e2e2e"/>
<rect x="795.40" y="539.4" width="26.2" height="24.4" rx="1.5" fill="#464646"/>
<circle cx="808.80" cy="551" r="6.6" fill="url(#gbtn)" stroke="#e36b22" stroke-width="2.1"/>
<rect x="789.30" y="563.8" width="38.6" height="1.4" fill="#111"/>
<rect x="789.30" y="565.2" width="38.6" height="144.2" fill="#444"/>
<rect x="789.30" y="565.2" width="2.6" height="144.2" fill="url(#gsil)"/>
<rect x="825.20" y="565.2" width="2.7" height="144.2" fill="url(#gsil)"/>
<rect x="795.90" y="565.2" width="25.2" height="14.6" fill="#474747"/>
<rect x="796.40" y="565.2" width="0.8" height="14.6" fill="#5e5e5e"/><rect x="819.60" y="565.2" width="0.8" height="14.6" fill="#5e5e5e"/>
<rect x="795.90" y="579.8" width="25.2" height="5.2" fill="#262626"/>
<rect x="795.90" y="585.5" width="25.2" height="25.6" fill="#0a0a0a"/>
<svg x="795.90" y="585.5" width="25.2" height="25.6" viewBox="0 0 25.2 25.6" overflow="hidden"><rect x="-40" y="-40" width="120" height="120" fill="url(#hex)" transform="translate(5.80 -1.85)"/></svg>
<rect x="795.90" y="617" width="25.2" height="24.8" fill="#0a0a0a"/>
<svg x="795.90" y="617" width="25.2" height="24.8" viewBox="0 0 25.2 24.8" overflow="hidden"><rect x="-40" y="-40" width="120" height="120" fill="url(#hex)" transform="translate(5.80 1.55)"/></svg>
<rect x="795.90" y="646.4" width="25.2" height="21.9" fill="#0a0a0a"/>
<svg x="795.90" y="646.4" width="25.2" height="21.9" viewBox="0 0 25.2 21.9" overflow="hidden"><rect x="-40" y="-40" width="120" height="120" fill="url(#hex)" transform="translate(5.80 -3.25)"/></svg>
<rect x="795.90" y="668.3" width="25.2" height="6.7" fill="#262626"/>
<path d="M798.40 679 H819.10 Q821.10 679 821.10 681 V703.4 Q821.10 705.4 819.10 705.4 H797.90 Q795.90 705.4 795.90 703.4 V681.5 Z" fill="#262626"/>
<rect x="789.30" y="709.4" width="38.6" height="1.8" fill="#1a1a1a"/>
</g>
<g>
<rect x="887.10" y="521.4" width="38.6" height="42.6" fill="#3d3d3d"/>
<rect x="887.10" y="521.4" width="38.6" height="1.2" fill="#4a4a4a"/>
<path d="M889.90 523 H921.90 V533.8 H892.10 Q889.90 533.8 889.90 531.5 Z" fill="#2b2b2b"/>
<rect x="892.80" y="526.3" width="6.8" height="4.6" rx="1.3" fill="none" stroke="#52a82a" stroke-width="0.9"/>
<path d="M912.40 528.2 H919.20 M915.80 524.8 V532" stroke="#5cb82a" stroke-width="1" fill="none"/>
<rect x="889.60" y="534.2" width="34" height="1.8" fill="#262626"/>
<rect x="890.40" y="536.2" width="32" height="27.6" rx="2" fill="#2e2e2e"/>
<rect x="893.20" y="539.4" width="26.2" height="24.4" rx="1.5" fill="#464646"/>
<circle cx="906.60" cy="551" r="6.6" fill="url(#gbtn)" stroke="#e36b22" stroke-width="2.1"/>
<rect x="887.10" y="563.8" width="38.6" height="1.4" fill="#111"/>
<rect x="887.10" y="565.2" width="38.6" height="144.2" fill="#444"/>
<rect x="887.10" y="565.2" width="2.6" height="144.2" fill="url(#gsil)"/>
<rect x="923.00" y="565.2" width="2.7" height="144.2" fill="url(#gsil)"/>
<rect x="893.70" y="565.2" width="25.2" height="14.6" fill="#474747"/>
<rect x="894.20" y="565.2" width="0.8" height="14.6" fill="#5e5e5e"/><rect x="917.40" y="565.2" width="0.8" height="14.6" fill="#5e5e5e"/>
<rect x="893.70" y="579.8" width="25.2" height="5.2" fill="#262626"/>
<rect x="893.70" y="585.5" width="25.2" height="25.6" fill="#0a0a0a"/>
<svg x="893.70" y="585.5" width="25.2" height="25.6" viewBox="0 0 25.2 25.6" overflow="hidden"><rect x="-40" y="-40" width="120" height="120" fill="url(#hex)" transform="translate(5.80 -1.85)"/></svg>
<rect x="893.70" y="617" width="25.2" height="24.8" fill="#0a0a0a"/>
<svg x="893.70" y="617" width="25.2" height="24.8" viewBox="0 0 25.2 24.8" overflow="hidden"><rect x="-40" y="-40" width="120" height="120" fill="url(#hex)" transform="translate(5.80 1.55)"/></svg>
<rect x="893.70" y="646.4" width="25.2" height="21.9" fill="#0a0a0a"/>
<svg x="893.70" y="646.4" width="25.2" height="21.9" viewBox="0 0 25.2 21.9" overflow="hidden"><rect x="-40" y="-40" width="120" height="120" fill="url(#hex)" transform="translate(5.80 -3.25)"/></svg>
<rect x="893.70" y="668.3" width="25.2" height="6.7" fill="#262626"/>
<path d="M896.20 679 H916.90 Q918.90 679 918.90 681 V703.4 Q918.90 705.4 916.90 705.4 H895.70 Q893.70 705.4 893.70 703.4 V681.5 Z" fill="#262626"/>
<rect x="887.10" y="709.4" width="38.6" height="1.8" fill="#1a1a1a"/>
</g>
<g>
<rect x="936.00" y="521.4" width="38.6" height="42.6" fill="#3d3d3d"/>
<rect x="936.00" y="521.4" width="38.6" height="1.2" fill="#4a4a4a"/>
<path d="M938.80 523 H970.80 V533.8 H941.00 Q938.80 533.8 938.80 531.5 Z" fill="#2b2b2b"/>
<rect x="941.70" y="526.3" width="6.8" height="4.6" rx="1.3" fill="none" stroke="#52a82a" stroke-width="0.9"/>
<path d="M961.30 528.2 H968.10 M964.70 524.8 V532" stroke="#5cb82a" stroke-width="1" fill="none"/>
<rect x="938.50" y="534.2" width="34" height="1.8" fill="#262626"/>
<rect x="939.30" y="536.2" width="32" height="27.6" rx="2" fill="#2e2e2e"/>
<rect x="942.10" y="539.4" width="26.2" height="24.4" rx="1.5" fill="#464646"/>
<circle cx="955.50" cy="551" r="6.6" fill="url(#gbtn)" stroke="#e36b22" stroke-width="2.1"/>
<rect x="936.00" y="563.8" width="38.6" height="1.4" fill="#111"/>
<rect x="936.00" y="565.2" width="38.6" height="144.2" fill="#444"/>
<rect x="936.00" y="565.2" width="2.6" height="144.2" fill="url(#gsil)"/>
<rect x="971.90" y="565.2" width="2.7" height="144.2" fill="url(#gsil)"/>
<rect x="942.60" y="565.2" width="25.2" height="14.6" fill="#474747"/>
<rect x="943.10" y="565.2" width="0.8" height="14.6" fill="#5e5e5e"/><rect x="966.30" y="565.2" width="0.8" height="14.6" fill="#5e5e5e"/>
<rect x="942.60" y="579.8" width="25.2" height="5.2" fill="#262626"/>
<rect x="942.60" y="585.5" width="25.2" height="25.6" fill="#0a0a0a"/>
<svg x="942.60" y="585.5" width="25.2" height="25.6" viewBox="0 0 25.2 25.6" overflow="hidden"><rect x="-40" y="-40" width="120" height="120" fill="url(#hex)" transform="translate(5.80 -1.85)"/></svg>
<rect x="942.60" y="617" width="25.2" height="24.8" fill="#0a0a0a"/>
<svg x="942.60" y="617" width="25.2" height="24.8" viewBox="0 0 25.2 24.8" overflow="hidden"><rect x="-40" y="-40" width="120" height="120" fill="url(#hex)" transform="translate(5.80 1.55)"/></svg>
<rect x="942.60" y="646.4" width="25.2" height="21.9" fill="#0a0a0a"/>
<svg x="942.60" y="646.4" width="25.2" height="21.9" viewBox="0 0 25.2 21.9" overflow="hidden"><rect x="-40" y="-40" width="120" height="120" fill="url(#hex)" transform="translate(5.80 -3.25)"/></svg>
<rect x="942.60" y="668.3" width="25.2" height="6.7" fill="#262626"/>
<path d="M945.10 679 H965.80 Q967.80 679 967.80 681 V703.4 Q967.80 705.4 965.80 705.4 H944.60 Q942.60 705.4 942.60 703.4 V681.5 Z" fill="#262626"/>
<rect x="936.00" y="709.4" width="38.6" height="1.8" fill="#1a1a1a"/>
</g>
<g>
<rect x="984.90" y="521.4" width="38.6" height="42.6" fill="#3d3d3d"/>
<rect x="984.90" y="521.4" width="38.6" height="1.2" fill="#4a4a4a"/>
<path d="M987.70 523 H1019.70 V533.8 H989.90 Q987.70 533.8 987.70 531.5 Z" fill="#2b2b2b"/>
<rect x="990.60" y="526.3" width="6.8" height="4.6" rx="1.3" fill="none" stroke="#52a82a" stroke-width="0.9"/>
<path d="M1010.20 528.2 H1017.00 M1013.60 524.8 V532" stroke="#5cb82a" stroke-width="1" fill="none"/>
<rect x="987.40" y="534.2" width="34" height="1.8" fill="#262626"/>
<rect x="988.20" y="536.2" width="32" height="27.6" rx="2" fill="#2e2e2e"/>
<rect x="991.00" y="539.4" width="26.2" height="24.4" rx="1.5" fill="#464646"/>
<circle cx="1004.40" cy="551" r="6.6" fill="url(#gbtn)" stroke="#e36b22" stroke-width="2.1"/>
<rect x="984.90" y="563.8" width="38.6" height="1.4" fill="#111"/>
<rect x="984.90" y="565.2" width="38.6" height="144.2" fill="#444"/>
<rect x="984.90" y="565.2" width="2.6" height="144.2" fill="url(#gsil)"/>
<rect x="1020.80" y="565.2" width="2.7" height="144.2" fill="url(#gsil)"/>
<rect x="991.50" y="565.2" width="25.2" height="14.6" fill="#474747"/>
<rect x="992.00" y="565.2" width="0.8" height="14.6" fill="#5e5e5e"/><rect x="1015.20" y="565.2" width="0.8" height="14.6" fill="#5e5e5e"/>
<rect x="991.50" y="579.8" width="25.2" height="5.2" fill="#262626"/>
<rect x="991.50" y="585.5" width="25.2" height="25.6" fill="#0a0a0a"/>
<svg x="991.50" y="585.5" width="25.2" height="25.6" viewBox="0 0 25.2 25.6" overflow="hidden"><rect x="-40" y="-40" width="120" height="120" fill="url(#hex)" transform="translate(5.80 -1.85)"/></svg>
<rect x="991.50" y="617" width="25.2" height="24.8" fill="#0a0a0a"/>
<svg x="991.50" y="617" width="25.2" height="24.8" viewBox="0 0 25.2 24.8" overflow="hidden"><rect x="-40" y="-40" width="120" height="120" fill="url(#hex)" transform="translate(5.80 1.55)"/></svg>
<rect x="991.50" y="646.4" width="25.2" height="21.9" fill="#0a0a0a"/>
<svg x="991.50" y="646.4" width="25.2" height="21.9" viewBox="0 0 25.2 21.9" overflow="hidden"><rect x="-40" y="-40" width="120" height="120" fill="url(#hex)" transform="translate(5.80 -3.25)"/></svg>
<rect x="991.50" y="668.3" width="25.2" height="6.7" fill="#262626"/>
<path d="M994.00 679 H1014.70 Q1016.70 679 1016.70 681 V703.4 Q1016.70 705.4 1014.70 705.4 H993.50 Q991.50 705.4 991.50 703.4 V681.5 Z" fill="#262626"/>
<rect x="984.90" y="709.4" width="38.6" height="1.8" fill="#1a1a1a"/>
</g>
<g>
<rect x="1033.80" y="521.4" width="38.6" height="42.6" fill="#3d3d3d"/>
<rect x="1033.80" y="521.4" width="38.6" height="1.2" fill="#4a4a4a"/>
<path d="M1036.60 523 H1068.60 V533.8 H1038.80 Q1036.60 533.8 1036.60 531.5 Z" fill="#2b2b2b"/>
<rect x="1039.50" y="526.3" width="6.8" height="4.6" rx="1.3" fill="none" stroke="#52a82a" stroke-width="0.9"/>
<path d="M1059.10 528.2 H1065.90 M1062.50 524.8 V532" stroke="#5cb82a" stroke-width="1" fill="none"/>
<rect x="1036.30" y="534.2" width="34" height="1.8" fill="#262626"/>
<rect x="1037.10" y="536.2" width="32" height="27.6" rx="2" fill="#2e2e2e"/>
<rect x="1039.90" y="539.4" width="26.2" height="24.4" rx="1.5" fill="#464646"/>
<circle cx="1053.30" cy="551" r="6.6" fill="url(#gbtn)" stroke="#e36b22" stroke-width="2.1"/>
<rect x="1033.80" y="563.8" width="38.6" height="1.4" fill="#111"/>
<rect x="1033.80" y="565.2" width="38.6" height="144.2" fill="#444"/>
<rect x="1033.80" y="565.2" width="2.6" height="144.2" fill="url(#gsil)"/>
<rect x="1069.70" y="565.2" width="2.7" height="144.2" fill="url(#gsil)"/>
<rect x="1040.40" y="565.2" width="25.2" height="14.6" fill="#474747"/>
<rect x="1040.90" y="565.2" width="0.8" height="14.6" fill="#5e5e5e"/><rect x="1064.10" y="565.2" width="0.8" height="14.6" fill="#5e5e5e"/>
<rect x="1040.40" y="579.8" width="25.2" height="5.2" fill="#262626"/>
<rect x="1040.40" y="585.5" width="25.2" height="25.6" fill="#0a0a0a"/>
<svg x="1040.40" y="585.5" width="25.2" height="25.6" viewBox="0 0 25.2 25.6" overflow="hidden"><rect x="-40" y="-40" width="120" height="120" fill="url(#hex)" transform="translate(5.80 -1.85)"/></svg>
<rect x="1040.40" y="617" width="25.2" height="24.8" fill="#0a0a0a"/>
<svg x="1040.40" y="617" width="25.2" height="24.8" viewBox="0 0 25.2 24.8" overflow="hidden"><rect x="-40" y="-40" width="120" height="120" fill="url(#hex)" transform="translate(5.80 1.55)"/></svg>
<rect x="1040.40" y="646.4" width="25.2" height="21.9" fill="#0a0a0a"/>
<svg x="1040.40" y="646.4" width="25.2" height="21.9" viewBox="0 0 25.2 21.9" overflow="hidden"><rect x="-40" y="-40" width="120" height="120" fill="url(#hex)" transform="translate(5.80 -3.25)"/></svg>
<rect x="1040.40" y="668.3" width="25.2" height="6.7" fill="#262626"/>
<path d="M1042.90 679 H1063.60 Q1065.60 679 1065.60 681 V703.4 Q1065.60 705.4 1063.60 705.4 H1042.40 Q1040.40 705.4 1040.40 703.4 V681.5 Z" fill="#262626"/>
<rect x="1033.80" y="709.4" width="38.6" height="1.8" fill="#1a1a1a"/>
</g>
<g>
<rect x="1082.70" y="521.4" width="38.6" height="42.6" fill="#3d3d3d"/>
<rect x="1082.70" y="521.4" width="38.6" height="1.2" fill="#4a4a4a"/>
<path d="M1085.50 523 H1117.50 V533.8 H1087.70 Q1085.50 533.8 1085.50 531.5 Z" fill="#2b2b2b"/>
<rect x="1088.40" y="526.3" width="6.8" height="4.6" rx="1.3" fill="none" stroke="#52a82a" stroke-width="0.9"/>
<path d="M1108.00 528.2 H1114.80 M1111.40 524.8 V532" stroke="#5cb82a" stroke-width="1" fill="none"/>
<rect x="1085.20" y="534.2" width="34" height="1.8" fill="#262626"/>
<rect x="1086.00" y="536.2" width="32" height="27.6" rx="2" fill="#2e2e2e"/>
<rect x="1088.80" y="539.4" width="26.2" height="24.4" rx="1.5" fill="#464646"/>
<circle cx="1102.20" cy="551" r="6.6" fill="url(#gbtn)" stroke="#e36b22" stroke-width="2.1"/>
<rect x="1082.70" y="563.8" width="38.6" height="1.4" fill="#111"/>
<rect x="1082.70" y="565.2" width="38.6" height="144.2" fill="#444"/>
<rect x="1082.70" y="565.2" width="2.6" height="144.2" fill="url(#gsil)"/>
<rect x="1118.60" y="565.2" width="2.7" height="144.2" fill="url(#gsil)"/>
<rect x="1089.30" y="565.2" width="25.2" height="14.6" fill="#474747"/>
<rect x="1089.80" y="565.2" width="0.8" height="14.6" fill="#5e5e5e"/><rect x="1113.00" y="565.2" width="0.8" height="14.6" fill="#5e5e5e"/>
<rect x="1089.30" y="579.8" width="25.2" height="5.2" fill="#262626"/>
<rect x="1089.30" y="585.5" width="25.2" height="25.6" fill="#0a0a0a"/>
<svg x="1089.30" y="585.5" width="25.2" height="25.6" viewBox="0 0 25.2 25.6" overflow="hidden"><rect x="-40" y="-40" width="120" height="120" fill="url(#hex)" transform="translate(5.80 -1.85)"/></svg>
<rect x="1089.30" y="617" width="25.2" height="24.8" fill="#0a0a0a"/>
<svg x="1089.30" y="617" width="25.2" height="24.8" viewBox="0 0 25.2 24.8" overflow="hidden"><rect x="-40" y="-40" width="120" height="120" fill="url(#hex)" transform="translate(5.80 1.55)"/></svg>
<rect x="1089.30" y="646.4" width="25.2" height="21.9" fill="#0a0a0a"/>
<svg x="1089.30" y="646.4" width="25.2" height="21.9" viewBox="0 0 25.2 21.9" overflow="hidden"><rect x="-40" y="-40" width="120" height="120" fill="url(#hex)" transform="translate(5.80 -3.25)"/></svg>
<rect x="1089.30" y="668.3" width="25.2" height="6.7" fill="#262626"/>
<path d="M1091.80 679 H1112.50 Q1114.50 679 1114.50 681 V703.4 Q1114.50 705.4 1112.50 705.4 H1091.30 Q1089.30 705.4 1089.30 703.4 V681.5 Z" fill="#262626"/>
<rect x="1082.70" y="709.4" width="38.6" height="1.8" fill="#1a1a1a"/>
</g>
<g>
<rect x="1131.60" y="521.4" width="38.6" height="42.6" fill="#3d3d3d"/>
<rect x="1131.60" y="521.4" width="38.6" height="1.2" fill="#4a4a4a"/>
<path d="M1134.40 523 H1166.40 V533.8 H1136.60 Q1134.40 533.8 1134.40 531.5 Z" fill="#2b2b2b"/>
<rect x="1137.30" y="526.3" width="6.8" height="4.6" rx="1.3" fill="none" stroke="#52a82a" stroke-width="0.9"/>
<path d="M1156.90 528.2 H1163.70 M1160.30 524.8 V532" stroke="#5cb82a" stroke-width="1" fill="none"/>
<rect x="1134.10" y="534.2" width="34" height="1.8" fill="#262626"/>
<rect x="1134.90" y="536.2" width="32" height="27.6" rx="2" fill="#2e2e2e"/>
<rect x="1137.70" y="539.4" width="26.2" height="24.4" rx="1.5" fill="#464646"/>
<circle cx="1151.10" cy="551" r="6.6" fill="url(#gbtn)" stroke="#e36b22" stroke-width="2.1"/>
<rect x="1131.60" y="563.8" width="38.6" height="1.4" fill="#111"/>
<rect x="1131.60" y="565.2" width="38.6" height="144.2" fill="#444"/>
<rect x="1131.60" y="565.2" width="2.6" height="144.2" fill="url(#gsil)"/>
<rect x="1167.50" y="565.2" width="2.7" height="144.2" fill="url(#gsil)"/>
<rect x="1138.20" y="565.2" width="25.2" height="14.6" fill="#474747"/>
<rect x="1138.70" y="565.2" width="0.8" height="14.6" fill="#5e5e5e"/><rect x="1161.90" y="565.2" width="0.8" height="14.6" fill="#5e5e5e"/>
<rect x="1138.20" y="579.8" width="25.2" height="5.2" fill="#262626"/>
<rect x="1138.20" y="585.5" width="25.2" height="25.6" fill="#0a0a0a"/>
<svg x="1138.20" y="585.5" width="25.2" height="25.6" viewBox="0 0 25.2 25.6" overflow="hidden"><rect x="-40" y="-40" width="120" height="120" fill="url(#hex)" transform="translate(5.80 -1.85)"/></svg>
<rect x="1138.20" y="617" width="25.2" height="24.8" fill="#0a0a0a"/>
<svg x="1138.20" y="617" width="25.2" height="24.8" viewBox="0 0 25.2 24.8" overflow="hidden"><rect x="-40" y="-40" width="120" height="120" fill="url(#hex)" transform="translate(5.80 1.55)"/></svg>
<rect x="1138.20" y="646.4" width="25.2" height="21.9" fill="#0a0a0a"/>
<svg x="1138.20" y="646.4" width="25.2" height="21.9" viewBox="0 0 25.2 21.9" overflow="hidden"><rect x="-40" y="-40" width="120" height="120" fill="url(#hex)" transform="translate(5.80 -3.25)"/></svg>
<rect x="1138.20" y="668.3" width="25.2" height="6.7" fill="#262626"/>
<path d="M1140.70 679 H1161.40 Q1163.40 679 1163.40 681 V703.4 Q1163.40 705.4 1161.40 705.4 H1140.20 Q1138.20 705.4 1138.20 703.4 V681.5 Z" fill="#262626"/>
<rect x="1131.60" y="709.4" width="38.6" height="1.8" fill="#1a1a1a"/>
</g>
</svg>
<div class="t" style="left:397.5px;top:737.50px;width:40px;text-align:center;font-size:12.6px;color:#1a1a1a;-webkit-text-stroke:0.25px #1a1a1a">0</div>
<div class="t" style="left:446.4px;top:737.50px;width:40px;text-align:center;font-size:12.6px;color:#1a1a1a;-webkit-text-stroke:0.25px #1a1a1a">1</div>
<div class="t" style="left:495.3px;top:737.50px;width:40px;text-align:center;font-size:12.6px;color:#1a1a1a;-webkit-text-stroke:0.25px #1a1a1a">2</div>
<div class="t" style="left:544.2px;top:737.50px;width:40px;text-align:center;font-size:12.6px;color:#1a1a1a;-webkit-text-stroke:0.25px #1a1a1a">3</div>
<div class="t" style="left:593.1px;top:737.50px;width:40px;text-align:center;font-size:12.6px;color:#1a1a1a;-webkit-text-stroke:0.25px #1a1a1a">4</div>
<div class="t" style="left:642.0px;top:737.50px;width:40px;text-align:center;font-size:12.6px;color:#1a1a1a;-webkit-text-stroke:0.25px #1a1a1a">5</div>
<div class="t" style="left:690.9px;top:737.50px;width:40px;text-align:center;font-size:12.6px;color:#1a1a1a;-webkit-text-stroke:0.25px #1a1a1a">6</div>
<div class="t" style="left:739.8px;top:737.50px;width:40px;text-align:center;font-size:12.6px;color:#1a1a1a;-webkit-text-stroke:0.25px #1a1a1a">7</div>
<div class="t" style="left:788.7px;top:737.50px;width:40px;text-align:center;font-size:12.6px;color:#1a1a1a;-webkit-text-stroke:0.25px #1a1a1a">8</div>
<div class="t" style="left:833.9px;top:737.50px;width:40px;text-align:center;font-size:12.6px;color:#1a1a1a;-webkit-text-stroke:0.25px #1a1a1a">9</div>
<div class="t" style="left:886.5px;top:737.50px;width:40px;text-align:center;font-size:12.6px;color:#1a1a1a;-webkit-text-stroke:0.25px #1a1a1a">10</div>
<div class="t" style="left:935.4px;top:737.50px;width:40px;text-align:center;font-size:12.6px;color:#1a1a1a;-webkit-text-stroke:0.25px #1a1a1a">11</div>
<div class="t" style="left:984.3px;top:737.50px;width:40px;text-align:center;font-size:12.6px;color:#1a1a1a;-webkit-text-stroke:0.25px #1a1a1a">12</div>
<div class="t" style="left:1033.2px;top:737.50px;width:40px;text-align:center;font-size:12.6px;color:#1a1a1a;-webkit-text-stroke:0.25px #1a1a1a">13</div>
<div class="t" style="left:1082.1px;top:737.50px;width:40px;text-align:center;font-size:12.6px;color:#1a1a1a;-webkit-text-stroke:0.25px #1a1a1a">14</div>
<div class="t" style="left:1131.0px;top:737.50px;width:40px;text-align:center;font-size:12.6px;color:#1a1a1a;-webkit-text-stroke:0.25px #1a1a1a">15</div>
<div class="t" style="left:1179.9px;top:737.50px;width:40px;text-align:center;font-size:12.6px;color:#1a1a1a;-webkit-text-stroke:0.25px #1a1a1a">16</div>
<div class="t" style="left:1228.8px;top:737.50px;width:40px;text-align:center;font-size:12.6px;color:#1a1a1a;-webkit-text-stroke:0.25px #1a1a1a">17</div>
<div class="t" style="left:1277.7px;top:737.50px;width:40px;text-align:center;font-size:12.6px;color:#1a1a1a;-webkit-text-stroke:0.25px #1a1a1a">18</div>
<div class="t" style="left:1326.6px;top:737.50px;width:40px;text-align:center;font-size:12.6px;color:#1a1a1a;-webkit-text-stroke:0.25px #1a1a1a">19</div>
<div class="t" style="left:1375.5px;top:737.50px;width:40px;text-align:center;font-size:12.6px;color:#1a1a1a;-webkit-text-stroke:0.25px #1a1a1a">20</div>
<div class="t" style="left:1424.4px;top:737.50px;width:40px;text-align:center;font-size:12.6px;color:#1a1a1a;-webkit-text-stroke:0.25px #1a1a1a">21</div>
<div class="t" style="left:1473.3px;top:737.50px;width:40px;text-align:center;font-size:12.6px;color:#1a1a1a;-webkit-text-stroke:0.25px #1a1a1a">22</div>
<div class="t" style="left:1522.2px;top:737.50px;width:40px;text-align:center;font-size:12.6px;color:#1a1a1a;-webkit-text-stroke:0.25px #1a1a1a">23</div>
<div style="position:absolute;left:1964px;top:402px;width:40px;height:222px;background:#9dcae3;border-radius:8px 0 0 8px"></div>
<div class="t" style="left:1983.3px;top:513px;font-size:18.8px;color:#fff;transform:translate(-50%,-50%) rotate(-90deg);line-height:1">Help &amp; Feedback</div>
<div style="position:absolute;left:1964px;top:688px;width:40px;height:61px;background:#9dcae3;border-radius:8px 0 0 8px"></div>
<svg style="position:absolute;left:1969px;top:698px" width="19" height="11" viewBox="0 0 19 11"><path d="M1 9 L9.5 1 L18 9" fill="none" stroke="#fff" stroke-width="1.8"/></svg>
<svg style="position:absolute;left:1969px;top:729px" width="19" height="11" viewBox="0 0 19 11"><path d="M1 1 L9.5 9 L18 1" fill="none" stroke="#fff" stroke-width="1.8"/></svg>
<div class="t" style="left:33.36px;top:799.15px;font-size:25.8px;color:#505050;font-weight:400;transform:scaleX(0.9404);transform-origin:0 0;">Physical Disks Overview</div>
<div style="position:absolute;left:34.5px;top:836px;width:944.3px;height:410.5px;background:#f3f3f3;border-top:1.5px solid #e0e0e0"></div>
<div style="position:absolute;left:130.5px;top:864.15px;width:16.5px;height:16.5px;border-radius:50%;background:#f4cc6e"></div>
<div class="t" style="left:149.05px;top:863.05px;font-size:16.3px;color:#1a1a1a;font-weight:400;transform:scaleX(1.0390);transform-origin:0 0;">Ready</div>
<div style="position:absolute;left:217.3px;top:864.15px;width:16.5px;height:16.5px;border-radius:50%;background:#9bc33a"></div>
<div class="t" style="left:236.83px;top:863.05px;font-size:16.3px;color:#1a1a1a;font-weight:400;transform:scaleX(1.0223);transform-origin:0 0;">Online</div>
<div style="position:absolute;left:304.4px;top:864.15px;width:16.5px;height:16.5px;border-radius:50%;background:#c4e38a"></div>
<div class="t" style="left:323.05px;top:863.05px;font-size:16.3px;color:#1a1a1a;font-weight:400;transform:scaleX(1.0387);transform-origin:0 0;">Foreign</div>
<div style="position:absolute;left:399.8px;top:864.15px;width:16.5px;height:16.5px;border-radius:50%;background:#2e9fe6"></div>
<div class="t" style="left:419.34px;top:863.05px;font-size:16.3px;color:#1a1a1a;font-weight:400;transform:scaleX(1.0181);transform-origin:0 0;">Offline</div>
<div style="position:absolute;left:486.6px;top:864.15px;width:16.5px;height:16.5px;border-radius:50%;background:#9ed8f5"></div>
<div class="t" style="left:505.36px;top:863.05px;font-size:16.3px;color:#1a1a1a;font-weight:400;transform:scaleX(1.0292);transform-origin:0 0;">Blocked</div>
<div style="position:absolute;left:584.6px;top:864.15px;width:16.5px;height:16.5px;border-radius:50%;background:#e84855"></div>
<div class="t" style="left:603.77px;top:863.05px;font-size:16.3px;color:#1a1a1a;font-weight:400;transform:scaleX(1.0219);transform-origin:0 0;">Failed</div>
<div style="position:absolute;left:668.7px;top:864.15px;width:16.5px;height:16.5px;border-radius:50%;background:#a55ee0"></div>
<div class="t" style="left:687.86px;top:863.05px;font-size:16.3px;color:#1a1a1a;font-weight:400;transform:scaleX(1.0279);transform-origin:0 0;">Non-RAID</div>
<div style="position:absolute;left:783.6px;top:864.15px;width:16.5px;height:16.5px;border-radius:50%;background:#f8a031"></div>
<div class="t" style="left:802.35px;top:863.05px;font-size:16.3px;color:#1a1a1a;font-weight:400;transform:scaleX(1.0379);transform-origin:0 0;">Removed</div>
<div style="position:absolute;left:130.5px;top:892.15px;width:16.5px;height:16.5px;border-radius:50%;background:#7390a6"></div>
<div class="t" style="left:149.21px;top:891.25px;font-size:16.3px;color:#1a1a1a;font-weight:400;transform:scaleX(1.0395);transform-origin:0 0;">Unknown</div>
<div style="position:absolute;left:238.8px;top:892.15px;width:16.5px;height:16.5px;border-radius:50%;background:#0a73d6"></div>
<div class="t" style="left:257.46px;top:891.25px;font-size:16.3px;color:#1a1a1a;font-weight:400;transform:scaleX(1.0290);transform-origin:0 0;">Read Only</div>
<div style="position:absolute;left:356.3px;top:892.15px;width:16.5px;height:16.5px;border-radius:50%;background:#6ab414"></div>
<div class="t" style="left:374.83px;top:891.25px;font-size:16.3px;color:#1a1a1a;font-weight:400;transform:scaleX(1.0256);transform-origin:0 0;">Sanitize in Progress</div>
<div style="position:absolute;left:543.6px;top:892.15px;width:16.5px;height:16.5px;border-radius:50%;background:#c8107a"></div>
<div class="t" style="left:562.43px;top:891.25px;font-size:16.3px;color:#1a1a1a;font-weight:400;transform:scaleX(1.0318);transform-origin:0 0;">Sanitize Failed</div>
<div style="position:absolute;left:691.7px;top:892.15px;width:16.5px;height:16.5px;border-radius:50%;background:#7b7b7b"></div>
<div class="t" style="left:710.62px;top:891.25px;font-size:16.3px;color:#1a1a1a;font-weight:400;transform:scaleX(1.0322);transform-origin:0 0;">Unusable</div>
<svg style="position:absolute;left:370.4px;top:961.2px" width="272" height="272" viewBox="-136 -136 272 272">
<circle cx="0" cy="0" r="129.4" fill="#f4cc6e" stroke="#fff" stroke-width="1.3"/>
<path d="M0 0 L-129.4 0 A129.4 129.4 0 0 1 0 -129.4 Z" fill="#9dc53a" stroke="#fff" stroke-width="1.5"/></svg>
<div class="t" style="left:390.22px;top:970.94px;font-size:17.3px;color:#111;font-weight:400;transform:scaleX(1.1309);transform-origin:0 0;">2</div>
<div class="t" style="left:611.95px;top:1193.34px;font-size:17.3px;color:#111;font-weight:400;transform:scaleX(1.0946);transform-origin:0 0;">6</div>
<div class="t" style="left:1019.3px;top:799.15px;font-size:25.8px;color:#505050;font-weight:400;transform:scaleX(0.9687);transform-origin:0 0;">Summary of Disks</div>
<div style="position:absolute;left:1020px;top:836px;width:945px;height:410.5px;background:#f3f3f3;border-top:1.5px solid #e0e0e0"></div>
<div class="t" style="left:1053.97px;top:874.63px;font-size:20.3px;color:#2a2afa;font-weight:400;transform:scaleX(0.9447);transform-origin:0 0;">Physical Disks</div>
<div style="position:absolute;left:1055.0px;top:894.2px;width:122.5px;height:1.6px;background:#2b2bf5"></div>
<div class="t" style="left:1581.88px;top:874.63px;font-size:20.3px;color:#4d4d4d;font-weight:400;transform:scaleX(1.0057);transform-origin:0 0;">8</div>
<div class="t" style="left:1055.5px;top:930.13px;font-size:20.3px;color:#2a2afa;font-weight:400;transform:scaleX(0.9452);transform-origin:0 0;">Virtual Disks</div>
<div style="position:absolute;left:1055.0px;top:949.7px;width:106.7px;height:1.6px;background:#2b2bf5"></div>
<div class="t" style="left:1582.98px;top:930.13px;font-size:20.3px;color:#4d4d4d;font-weight:400;transform:scaleX(0.7165);transform-origin:0 0;">1</div>
<div class="t" style="left:1096.65px;top:986.23px;font-size:20.3px;color:#4d4d4d;font-weight:400;transform:scaleX(0.9361);transform-origin:0 0;">Global</div>
<div class="t" style="left:1582.1px;top:986.23px;font-size:20.3px;color:#4d4d4d;font-weight:400;transform:scaleX(0.9852);transform-origin:0 0;">0</div>
<div class="t" style="left:1096.06px;top:1041.43px;font-size:20.3px;color:#4d4d4d;font-weight:400;transform:scaleX(0.9476);transform-origin:0 0;">Dedicated</div>
<div class="t" style="left:1582.1px;top:1041.43px;font-size:20.3px;color:#4d4d4d;font-weight:400;transform:scaleX(0.9852);transform-origin:0 0;">0</div>
<div class="t" style="left:1096.11px;top:1097.53px;font-size:20.3px;color:#4d4d4d;font-weight:400;transform:scaleX(0.9180);transform-origin:0 0;">Non-RAID Disks</div>
<div class="t" style="left:1582.1px;top:1097.53px;font-size:20.3px;color:#4d4d4d;font-weight:400;transform:scaleX(0.9852);transform-origin:0 0;">0</div>
<div style="position:absolute;left:0;top:1249px;width:1999px;height:1px;background:#000"></div>
</body></html>
